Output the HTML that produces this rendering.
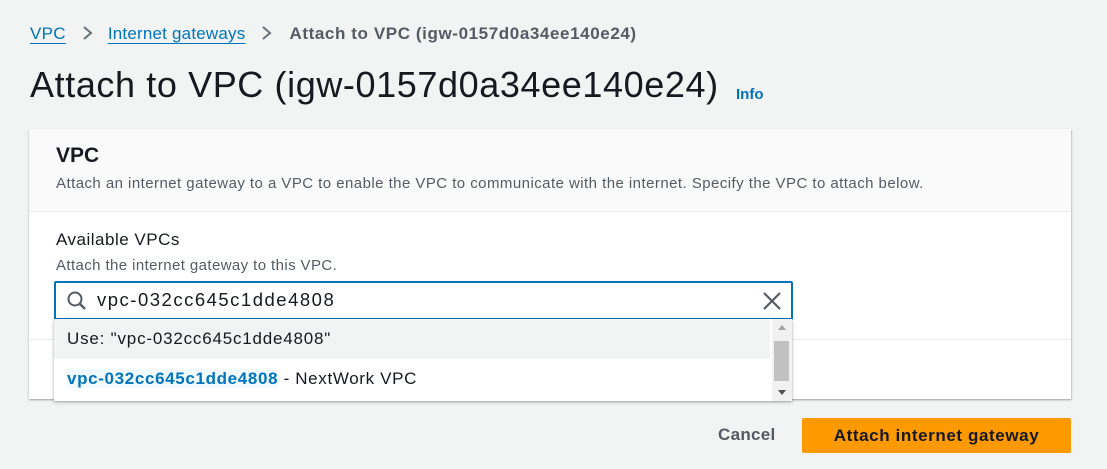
<!DOCTYPE html>
<html><head><style>
body{margin:0;width:1107px;height:469px;background:#f2f3f3;font-family:"Liberation Sans",sans-serif;position:relative;overflow:hidden;color:#16191f}
.a{position:absolute;white-space:nowrap}
.lnk{color:#0073bb;text-decoration:underline;text-underline-offset:4px}
</style></head><body>
<div class="a" style="left:30px;top:24px;font-size:17px;color:#545b64;letter-spacing:.3px">
<span class="lnk">VPC</span><svg width="42" height="16" viewBox="0 0 42 16" style="vertical-align:-2px"><path d="M18 2l7 6-7 6" fill="none" stroke="#687078" stroke-width="2"/></svg><span class="lnk" style="letter-spacing:.2px">Internet gateways</span><svg width="44" height="16" viewBox="0 0 44 16" style="vertical-align:-2px"><path d="M18 2l7 6-7 6" fill="none" stroke="#687078" stroke-width="2"/></svg><b style="color:#545b64;font-size:17px;letter-spacing:.6px">Attach to VPC (igw-0157d0a34ee140e24)</b>
</div>
<div class="a" style="left:30px;top:64px;font-size:36px;letter-spacing:.6px;color:#16191f">Attach to VPC (igw-0157d0a34ee140e24)</div>
<div class="a" style="left:736px;top:86px;font-size:15px;font-weight:bold;color:#0073bb">Info</div>

<div class="a" style="left:29px;top:129px;width:1042px;height:270px;background:#fff;box-shadow:0 1px 2px rgba(0,28,36,.3),1px 1px 1px rgba(0,28,36,.1)">
 <div style="height:82px;background:#fafafa;border-bottom:1px solid #eaeded"></div>
 <div style="position:absolute;left:0;right:0;top:210px;border-top:1px solid #eaeded"></div>
</div>
<div class="a" style="left:56px;top:144px;font-size:21px;font-weight:bold">VPC</div>
<div class="a" style="left:56px;top:175px;font-size:15px;letter-spacing:.45px;color:#545b64">Attach an internet gateway to a VPC to enable the VPC to communicate with the internet. Specify the VPC to attach below.</div>
<div class="a" style="left:56px;top:230px;font-size:17px;letter-spacing:.5px">Available VPCs</div>
<div class="a" style="left:56px;top:257px;font-size:15px;letter-spacing:.4px;color:#545b64">Attach the internet gateway to this VPC.</div>

<div class="a" style="left:54px;top:281px;width:735px;height:35px;border:2px solid #0073bb;border-radius:2px;background:#fff"></div>
<svg class="a" style="left:66px;top:290px" width="22" height="22" viewBox="0 0 22 22"><circle cx="9" cy="9" r="6.5" fill="none" stroke="#545b64" stroke-width="2"/><path d="M14 14l5 5" stroke="#545b64" stroke-width="2.4"/></svg>
<div class="a" style="left:97px;top:289px;font-size:18.5px;letter-spacing:1.5px">vpc-032cc645c1dde4808</div>
<svg class="a" style="left:762px;top:291px" width="20" height="20" viewBox="0 0 20 20"><path d="M2 2l16 16M18 2L2 18" stroke="#545b64" stroke-width="2.2"/></svg>

<div class="a" style="left:54px;top:319px;width:738px;height:82px;background:#fff;box-shadow:0 1px 3px rgba(0,0,0,.35)">
 <div style="position:absolute;left:0;top:0;width:716px;height:38px;background:#f2f3f3;border-bottom:1px solid #eaeded"></div>
 <div style="position:absolute;right:0;top:0;width:20px;height:82px;background:#f1f1f1"></div>
 <div style="position:absolute;right:3px;top:22px;width:15px;height:40px;background:#c1c1c1"></div>
 <div style="position:absolute;right:6px;top:6px;width:0;height:0;border:4px solid transparent;border-bottom:5px solid #a3a3a3;border-top:0"></div>
 <div style="position:absolute;right:6px;bottom:6px;width:0;height:0;border:4px solid transparent;border-top:5px solid #505050;border-bottom:0"></div>
</div>
<div class="a" style="left:67px;top:329px;font-size:17px;letter-spacing:.8px">Use: "vpc-032cc645c1dde4808"</div>
<div class="a" style="left:67px;top:369px;font-size:17px;letter-spacing:.65px"><b style="color:#0073bb;background:#f1faff">vpc-032cc645c1dde4808</b> - NextWork VPC</div>

<div class="a" style="left:718px;top:425px;font-size:17px;font-weight:bold;color:#545b64;letter-spacing:.3px">Cancel</div>
<div class="a" style="left:802px;top:418px;width:269px;height:35px;background:#ff9900;border-radius:2px;color:#16191f;font-size:17px;letter-spacing:.6px;font-weight:bold;text-align:center;line-height:35px">Attach internet gateway</div>
</body></html>
